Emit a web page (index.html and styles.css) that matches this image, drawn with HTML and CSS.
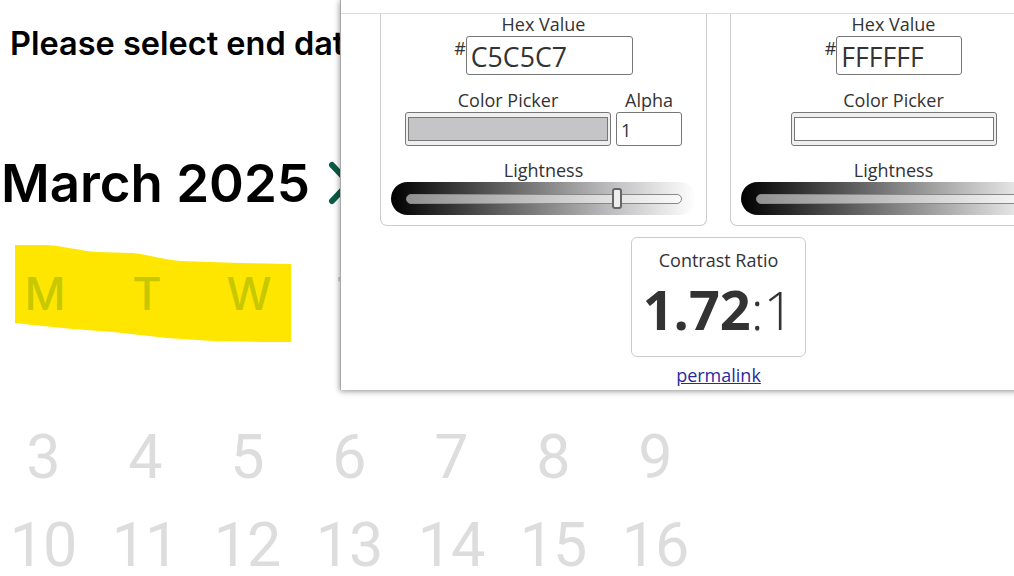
FILE: index.html
```html
<!DOCTYPE html>
<html lang="en">
<head>
  <meta charset="UTF-8">
  <meta name="viewport" content="width=device-width, initial-scale=1.0">
  <title>Select end date</title>
  <link rel="stylesheet" href="styles.css">
</head>
<body>
  <main class="page">
    <h1 class="title">Please select end date</h1>
    <div class="month">
      <span class="month-name">March 2025</span>
      <svg class="chevron" width="24" height="44" viewBox="0 0 24 44">
        <path d="M4 4 L21 22 L4 40" fill="none" stroke="#0b5a45" stroke-width="6" stroke-linecap="round" stroke-linejoin="round"/>
      </svg>
    </div>

    <div class="calendar">
      <!-- hand drawn marker over the weekday names -->
      <svg class="marker" width="300" height="100" viewBox="0 0 300 100">
        <path d="M15 0 L45 0 C60 0 80 6 97 7 L133 8 C150 10 165 15 180 16 L240 18 L291 19 L291 97 L263 97 L213 96 L167 93 L113 87 L73 84 L33 80 L15 78 Z" fill="#ffe600"/>
      </svg>
      <div class="days">
        <span class="weekday on-marker">M</span>
        <span class="weekday on-marker">T</span>
        <span class="weekday on-marker">W</span>
        <span class="weekday">T</span>
      </div>
      <div class="dates first-week">
        <span>3</span><span>4</span><span>5</span><span>6</span><span>7</span><span>8</span><span>9</span>
      </div>
      <div class="dates">
        <span>10</span><span>11</span><span>12</span><span>13</span><span>14</span><span>15</span><span>16</span>
      </div>
    </div>
  </main>

  <section class="checker">
    <div class="checker-top"></div>
    <div class="cards">
      <div class="card">
        <label class="caption">Hex Value</label>
        <div class="hex-row">
          <span class="hash">#</span>
          <input class="hex hex-wide" type="text" value="C5C5C7">
        </div>
        <div class="picker-row">
          <div class="field">
            <label class="caption">Color Picker</label>
            <input class="swatch" type="color" value="#c5c5c7">
          </div>
          <div class="field">
            <label class="caption">Alpha</label>
            <input class="alpha" type="text" value="1">
          </div>
        </div>
        <label class="caption caption-light">Lightness</label>
        <div class="band band-fg">
          <input class="slider" type="range" min="0" max="100" value="78">
        </div>
      </div>

      <div class="card">
        <label class="caption">Hex Value</label>
        <div class="hex-row">
          <span class="hash">#</span>
          <input class="hex" type="text" value="FFFFFF">
        </div>
        <div class="picker-row">
          <div class="field">
            <label class="caption">Color Picker</label>
            <input class="swatch" type="color" value="#ffffff">
          </div>
        </div>
        <label class="caption caption-light">Lightness</label>
        <div class="band band-bg">
          <input class="slider" type="range" min="0" max="100" value="100">
        </div>
      </div>
    </div>

    <div class="ratio-box">
      <div class="caption">Contrast Ratio</div>
      <div class="ratio"><strong>1.72</strong>:1</div>
    </div>
    <a class="permalink" href="#">permalink</a>
  </section>
</body>
</html>
```

FILE: styles.css
```css
html, body {
  height: 100%;
}
body {
  margin: 0;
  overflow: hidden;
  background: #fff;
  font-family: Inter, Arial, sans-serif;
  color: #000;
}
.page {
  width: 1014px;
}
.title {
  margin: 0;
  padding: 24px 0 0 10px;
  font-size: 32.5px;
  line-height: 40px;
  font-weight: 600;
  white-space: nowrap;
}
.month {
  display: flex;
  align-items: center;
  gap: 18px;
  margin-top: 88px;
  padding-left: 1px;
}
.month-name {
  font-size: 52.8px;
  line-height: 62px;
  font-weight: 600;
  white-space: nowrap;
}
.calendar {
  position: relative;
  margin-top: 31px;
  margin-left: -8px;
}
.marker {
  position: absolute;
  top: 0;
  left: 8px;
}
.days, .dates {
  position: relative;
  display: grid;
  grid-template-columns: repeat(7, 102px);
  text-align: center;
}
.days {
  padding: 24px 0 0 2px;
}
.weekday {
  font-size: 45px;
  line-height: 50px;
  font-weight: 500;
  color: #ccc;
}
.on-marker {
  color: #c8c800;
}
.dates {
  height: 88px;
  align-items: center;
  font-family: Roboto, Arial, sans-serif;
  font-size: 61px;
  line-height: 60px;
  font-weight: 400;
  letter-spacing: -1px;
  color: #ddd;
}
.first-week {
  margin-top: 94px;
}

.checker {
  position: absolute;
  top: 0;
  left: 340px;
  width: 760px;
  height: 390px;
  box-sizing: border-box;
  background: #fff;
  border-left: 1px solid #aaa;
  box-shadow: 0 1px 6px rgba(0, 0, 0, 0.45);
  font-family: "Open Sans", Arial, sans-serif;
  color: #333;
  text-align: center;
}
.checker-top {
  height: 13px;
  border-bottom: 1px solid #ddd;
}
.cards {
  display: flex;
  gap: 23px;
  padding-left: 39px;
}
.card {
  width: 327px;
  height: 212px;
  box-sizing: border-box;
  border: 1px solid #ccc;
  border-top: 0;
  border-radius: 0 0 7px 7px;
  display: flex;
  flex-direction: column;
  align-items: center;
}
.caption {
  display: block;
  font-size: 18px;
  line-height: 22px;
}
.card > .caption:first-child {
  margin-top: -1px;
}
.hex-row {
  display: flex;
  margin-top: 1px;
}
.hash {
  font-size: 18px;
  line-height: 22px;
  margin-top: 1px;
}
.hex {
  width: 126px;
  height: 39px;
  box-sizing: border-box;
  padding: 1px 4px 0;
  border: 1px solid #777;
  border-radius: 3px;
  font-family: inherit;
  font-size: 26.67px;
  color: #333;
}
.hex-wide {
  width: 167px;
}
.picker-row {
  display: flex;
  gap: 5px;
  margin-top: 14px;
}
.swatch {
  display: block;
  width: 206px;
  height: 34px;
  box-sizing: border-box;
  padding: 4px 2px;
  margin: 1px 0 0;
  background: #efefef;
  border: 1px solid #777;
  border-radius: 3px;
}
.swatch::-webkit-color-swatch-wrapper {
  padding: 0;
}
.swatch::-webkit-color-swatch {
  border: 1px solid #777;
  border-radius: 0;
}
.alpha {
  display: block;
  width: 66px;
  height: 34px;
  box-sizing: border-box;
  padding: 2px 4px 0;
  margin-top: 1px;
  border: 1px solid #777;
  border-radius: 3px;
  font-family: inherit;
  font-size: 18px;
  color: #333;
}
.caption-light {
  margin-top: 13px;
}
.band {
  width: 305px;
  height: 33px;
  margin-top: 1px;
  border-radius: 17px;
  display: flex;
  align-items: center;
  justify-content: center;
}
.band-fg {
  background: linear-gradient(to right, #000, #c5c5c7 75%, #fff);
}
.band-bg {
  background: linear-gradient(to right, #000, #fff);
}
.slider {
  -webkit-appearance: none;
  appearance: none;
  width: 276px;
  height: 10px;
  margin: 0;
  box-sizing: border-box;
  background: rgba(255, 255, 255, 0.55);
  border: 1px solid #888;
  border-radius: 5px;
}
.slider::-webkit-slider-thumb {
  -webkit-appearance: none;
  width: 10px;
  height: 21px;
  box-sizing: border-box;
  background: #eee;
  border: 2px solid #666;
  border-radius: 3px;
}
.ratio-box {
  width: 175px;
  height: 120px;
  box-sizing: border-box;
  margin: 11px 0 0 290px;
  padding-top: 11px;
  border: 1px solid #ccc;
  border-radius: 6px;
}
.ratio {
  font-size: 54px;
  line-height: 76px;
  font-weight: 300;
}
.ratio strong {
  font-weight: 700;
}
.permalink {
  display: block;
  width: 175px;
  margin-left: 290px;
  margin-top: 6px;
  font-size: 18px;
  line-height: 24px;
  color: #2a2a9e;
}
```
